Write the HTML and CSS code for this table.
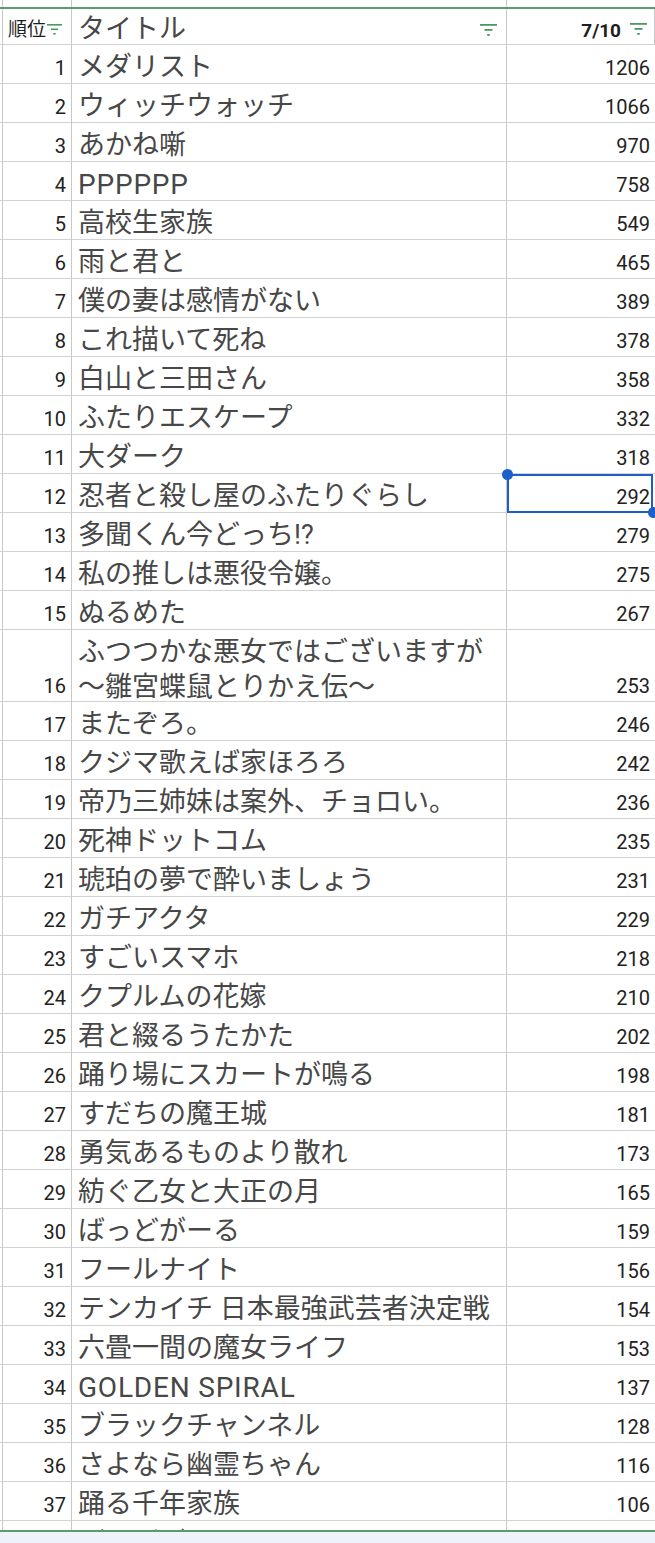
FILE: index.html
```html
<!DOCTYPE html>
<html lang="ja">
<head>
<meta charset="utf-8">
<title>順位</title>
<link rel="stylesheet" href="styles.css">
</head>
<body>
<div class="screen">
  <div class="strip"><div></div><div></div><div></div><div class="last"></div></div>
  <div class="rule"></div>
  <div class="sheet">
    <div class="row head">
      <div class="cell stub"></div>
      <div class="cell hrank"><span>順位</span><svg class="filt small" viewBox="0 0 15 11"><rect x="0" y="0" width="15" height="1.6"/><rect x="4" y="4.5" width="7" height="1.6"/><rect x="6.3" y="9" width="2.4" height="1.6"/></svg></div>
      <div class="cell htitle"><span class="ht">タイトル</span><svg class="filt" viewBox="0 0 17 12"><rect x="0" y="0" width="17" height="1.8"/><rect x="4.5" y="5" width="8" height="1.8"/><rect x="7.2" y="10" width="2.6" height="1.8"/></svg></div>
      <div class="cell hval"><span class="hv">7/10</span><svg class="filt" viewBox="0 0 17 12"><rect x="0" y="0" width="17" height="1.8"/><rect x="4.5" y="5" width="8" height="1.8"/><rect x="7.2" y="10" width="2.6" height="1.8"/></svg></div>
    </div>
    <div class="row"><div class="cell stub"></div><div class="cell num">1</div><div class="cell title">メダリスト</div><div class="cell num val">1206</div></div>
    <div class="row"><div class="cell stub"></div><div class="cell num">2</div><div class="cell title">ウィッチウォッチ</div><div class="cell num val">1066</div></div>
    <div class="row"><div class="cell stub"></div><div class="cell num">3</div><div class="cell title">あかね噺</div><div class="cell num val">970</div></div>
    <div class="row"><div class="cell stub"></div><div class="cell num">4</div><div class="cell title lat">PPPPPP</div><div class="cell num val">758</div></div>
    <div class="row"><div class="cell stub"></div><div class="cell num">5</div><div class="cell title">高校生家族</div><div class="cell num val">549</div></div>
    <div class="row"><div class="cell stub"></div><div class="cell num">6</div><div class="cell title">雨と君と</div><div class="cell num val">465</div></div>
    <div class="row"><div class="cell stub"></div><div class="cell num">7</div><div class="cell title">僕の妻は感情がない</div><div class="cell num val">389</div></div>
    <div class="row"><div class="cell stub"></div><div class="cell num">8</div><div class="cell title">これ描いて死ね</div><div class="cell num val">378</div></div>
    <div class="row"><div class="cell stub"></div><div class="cell num">9</div><div class="cell title">白山と三田さん</div><div class="cell num val">358</div></div>
    <div class="row"><div class="cell stub"></div><div class="cell num">10</div><div class="cell title">ふたりエスケープ</div><div class="cell num val">332</div></div>
    <div class="row"><div class="cell stub"></div><div class="cell num">11</div><div class="cell title">大ダーク</div><div class="cell num val">318</div></div>
    <div class="row"><div class="cell stub"></div><div class="cell num">12</div><div class="cell title">忍者と殺し屋のふたりぐらし</div><div class="cell num val selected">292<span class="sel"><span class="dot tl"></span><span class="dot br"></span></span></div></div>
    <div class="row"><div class="cell stub"></div><div class="cell num">13</div><div class="cell title">多聞くん今どっち!?</div><div class="cell num val">279</div></div>
    <div class="row"><div class="cell stub"></div><div class="cell num">14</div><div class="cell title">私の推しは悪役令嬢。</div><div class="cell num val">275</div></div>
    <div class="row"><div class="cell stub"></div><div class="cell num">15</div><div class="cell title">ぬるめた</div><div class="cell num val">267</div></div>
    <div class="row tall"><div class="cell stub"></div><div class="cell num">16</div><div class="cell title wrap"><span class="lines">ふつつかな悪女ではございますが<br>〜雛宮蝶鼠とりかえ伝〜</span></div><div class="cell num val">253</div></div>
    <div class="row"><div class="cell stub"></div><div class="cell num">17</div><div class="cell title">またぞろ。</div><div class="cell num val">246</div></div>
    <div class="row"><div class="cell stub"></div><div class="cell num">18</div><div class="cell title">クジマ歌えば家ほろろ</div><div class="cell num val">242</div></div>
    <div class="row"><div class="cell stub"></div><div class="cell num">19</div><div class="cell title">帝乃三姉妹は案外、チョロい。</div><div class="cell num val">236</div></div>
    <div class="row"><div class="cell stub"></div><div class="cell num">20</div><div class="cell title">死神ドットコム</div><div class="cell num val">235</div></div>
    <div class="row"><div class="cell stub"></div><div class="cell num">21</div><div class="cell title">琥珀の夢で酔いましょう</div><div class="cell num val">231</div></div>
    <div class="row"><div class="cell stub"></div><div class="cell num">22</div><div class="cell title">ガチアクタ</div><div class="cell num val">229</div></div>
    <div class="row"><div class="cell stub"></div><div class="cell num">23</div><div class="cell title">すごいスマホ</div><div class="cell num val">218</div></div>
    <div class="row"><div class="cell stub"></div><div class="cell num">24</div><div class="cell title">クプルムの花嫁</div><div class="cell num val">210</div></div>
    <div class="row"><div class="cell stub"></div><div class="cell num">25</div><div class="cell title">君と綴るうたかた</div><div class="cell num val">202</div></div>
    <div class="row"><div class="cell stub"></div><div class="cell num">26</div><div class="cell title">踊り場にスカートが鳴る</div><div class="cell num val">198</div></div>
    <div class="row"><div class="cell stub"></div><div class="cell num">27</div><div class="cell title">すだちの魔王城</div><div class="cell num val">181</div></div>
    <div class="row"><div class="cell stub"></div><div class="cell num">28</div><div class="cell title">勇気あるものより散れ</div><div class="cell num val">173</div></div>
    <div class="row"><div class="cell stub"></div><div class="cell num">29</div><div class="cell title">紡ぐ乙女と大正の月</div><div class="cell num val">165</div></div>
    <div class="row"><div class="cell stub"></div><div class="cell num">30</div><div class="cell title">ばっどがーる</div><div class="cell num val">159</div></div>
    <div class="row"><div class="cell stub"></div><div class="cell num">31</div><div class="cell title">フールナイト</div><div class="cell num val">156</div></div>
    <div class="row"><div class="cell stub"></div><div class="cell num">32</div><div class="cell title">テンカイチ 日本最強武芸者決定戦</div><div class="cell num val">154</div></div>
    <div class="row"><div class="cell stub"></div><div class="cell num">33</div><div class="cell title">六畳一間の魔女ライフ</div><div class="cell num val">153</div></div>
    <div class="row"><div class="cell stub"></div><div class="cell num">34</div><div class="cell title lat">GOLDEN SPIRAL</div><div class="cell num val">137</div></div>
    <div class="row"><div class="cell stub"></div><div class="cell num">35</div><div class="cell title">ブラックチャンネル</div><div class="cell num val">128</div></div>
    <div class="row"><div class="cell stub"></div><div class="cell num">36</div><div class="cell title">さよなら幽霊ちゃん</div><div class="cell num val">116</div></div>
    <div class="row"><div class="cell stub"></div><div class="cell num">37</div><div class="cell title">踊る千年家族</div><div class="cell num val">106</div></div>
    <div class="row"><div class="cell stub"></div><div class="cell num"></div><div class="cell title">ばっどがーる</div><div class="cell num val"></div></div>
  </div>
  <div class="rule"></div>
  <div class="foot"></div>
</div>
</body>
</html>
```

FILE: styles.css
```css
html, body {
  margin: 0;
  padding: 0;
  background: #ffffff;
}

body {
  width: 655px;
  height: 1543px;
  overflow: hidden;
  font-family: Roboto, "Noto Sans CJK JP", sans-serif;
}

.screen {
  display: flex;
  flex-direction: column;
  height: 1543px;
}

.strip {
  display: grid;
  grid-template-columns: 3px 69px 435px 148px;
  height: 7px;
  flex: none;
}

.strip > div {
  border-right: 1px solid #c8c8c8;
}

.strip > .last {
  border-right: none;
}

.rule {
  height: 2px;
  flex: none;
  background: #5c9b6a;
}

.sheet {
  display: flex;
  flex-direction: column;
  height: 1521px;
  flex: none;
  overflow: hidden;
}

.row {
  display: grid;
  grid-template-columns: 3px 69px 435px 148px;
  height: 39px;
  flex: none;
}

.row.head {
  height: 36px;
}

.row.tall {
  height: 72px;
}

.cell {
  box-sizing: border-box;
  border-right: 1px solid #c8c8c8;
  border-bottom: 1px solid #d2d2d2;
  display: flex;
  align-items: flex-end;
  white-space: nowrap;
  overflow: hidden;
  min-width: 0;
}

.cell.val {
  border-right: none;
  overflow: visible;
}

.num {
  justify-content: flex-end;
  padding: 0 5px 3px 0;
  font-size: 20px;
  line-height: 24px;
  color: #222222;
}

.title {
  padding: 0 0 0 6px;
  font-size: 27px;
  line-height: 31px;
  color: #474747;
}

.title.lat {
  font-size: 28px;
  letter-spacing: 0.8px;
}

.title.wrap {
  white-space: normal;
  line-height: 35px;
}

.lines {
  display: block;
  margin-bottom: -4px;
}

.hrank {
  padding: 0 0 2px 5px;
  font-size: 19px;
  line-height: 24px;
  color: #1e1e1e;
  gap: 1px;
}

.htitle {
  justify-content: space-between;
  padding: 0 9px 0 6px;
  font-size: 27px;
  line-height: 29px;
  color: #474747;
}

.hval {
  justify-content: flex-end;
  padding: 0 7px 1px 0;
  font-size: 19px;
  line-height: 24px;
  font-weight: 700;
  color: #1e1e1e;
  gap: 9px;
}

.filt {
  width: 17px;
  height: 12px;
  fill: #4a9a63;
  flex: none;
  margin-bottom: 8px;
}

.filt.small {
  width: 15px;
  height: 11px;
  margin-bottom: 7px;
}

.hval .filt {
  margin-bottom: 8px;
}

.selected {
  position: relative;
}

.sel {
  position: absolute;
  top: 0;
  left: 0;
  right: 2px;
  bottom: -1px;
  border: 2px solid #1b5fcb;
}

.dot {
  position: absolute;
  width: 11px;
  height: 11px;
  border-radius: 50%;
  background: #1b5fcb;
}

.dot.tl {
  top: -7px;
  left: -7px;
}

.dot.br {
  bottom: -7px;
  right: -8px;
}

.foot {
  flex: 1;
  background: #eef2f9;
}
```
